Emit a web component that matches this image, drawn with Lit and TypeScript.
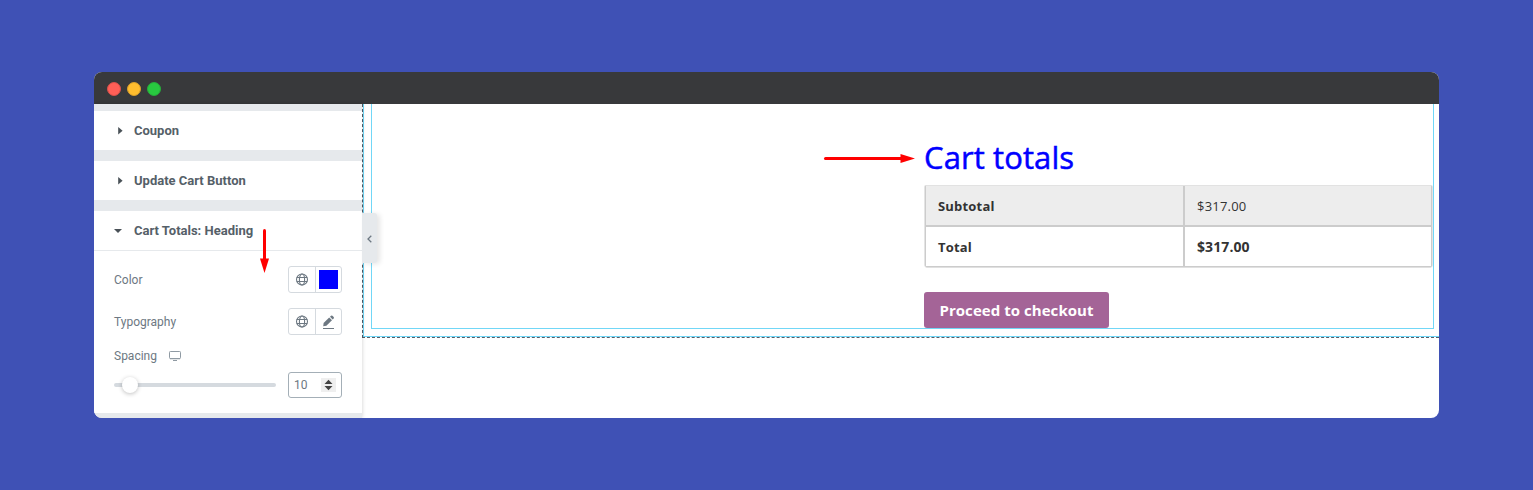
import { LitElement, html, svg, css } from 'lit';
import { customElement, property } from 'lit/decorators.js';

const globeIcon = svg`
  <svg width="14" height="14" viewBox="0 0 14 14" fill="none" stroke="#6d7882" stroke-width="1.1">
    <circle cx="7" cy="6.5" r="5.5" />
    <ellipse cx="7" cy="6.5" rx="2.6" ry="5.5" />
    <path d="M1.8 4.5h10.4M1.8 8.5h10.4" />
  </svg>
`;

const pencilIcon = svg`
  <svg width="14" height="14" viewBox="0 0 14 14" fill="#6d7882">
    <path d="M2.2 11.2l.4-3.2 5.6-5.6 2.8 2.8-5.6 5.6z" />
    <path d="M9 1.7l1-1q.7-.6 1.4 0l1.3 1.3q.6.7 0 1.4l-1 1z" />
    <path d="M2 13h11v1H2z" />
  </svg>
`;

@customElement('panel-section')
class PanelSection extends LitElement {
  @property() label = '';
  @property({ type: Boolean, reflect: true }) open = false;

  static styles = css`
    :host {
      display: block;
      background: #fff;
    }
    .head {
      display: flex;
      align-items: center;
      height: 39px;
      padding-left: 20px;
      font-size: 13px;
      font-weight: 700;
      color: #556068;
    }
    :host([open]) .head {
      border-bottom: 1px solid #e6e9ec;
    }
    .caret {
      width: 20px;
      height: 8px;
      flex: none;
    }
  `;

  render() {
    return html`
      <div class="head">
        <svg class="caret" viewBox="0 0 20 8" fill="#495157">
          ${this.open
            ? svg`<path d="M0 2h8l-4 4z" />`
            : svg`<path d="M4.2 0v7.4l4.4-3.7z" />`}
        </svg>
        <span>${this.label}</span>
      </div>
      <slot></slot>
    `;
  }
}

@customElement('cart-totals')
class CartTotals extends LitElement {
  static styles = css`
    :host {
      display: block;
      width: 509px;
      font-family: 'Open Sans', 'Noto Sans', sans-serif;
      color: #333;
    }
    .title {
      margin: 0;
      height: 49px;
      line-height: 42px;
      font-size: 31px;
      font-weight: 400;
      letter-spacing: 0.1px;
      color: #0000ff;
      -webkit-text-stroke: 0.5px #0000ff;
      white-space: nowrap;
    }
    .totals {
      display: grid;
      grid-template-columns: 257px 2px 246px;
      grid-template-rows: 39px 2px 39px;
      background: #ccc;
      border: 1px solid #ccc;
      border-top-color: #e2e2e2;
      border-radius: 2px;
      margin: 0 1px;
      box-shadow: -1px 0 #e4e4e4, 1px 0 #e4e4e4, 0 1px #e0e0e0;
    }
    .cell {
      display: flex;
      align-items: center;
      padding-left: 12px;
      background: #fff;
      font-size: 13px;
      letter-spacing: 0.2px;
    }
    .shade {
      background: #ededed;
    }
    .value {
      grid-column: 3;
    }
    .last {
      grid-row: 3;
    }
    .strong {
      font-weight: 700;
    }
    .amount {
      font-size: 14px;
      letter-spacing: 0.1px;
    }
    .checkout {
      display: flex;
      align-items: center;
      justify-content: center;
      width: 185px;
      height: 36px;
      margin-top: 25px;
      padding: 0;
      border: 0;
      border-radius: 3px;
      background: #a46497;
      color: #fff;
      font: 700 15px 'Open Sans', sans-serif;
      letter-spacing: 0.05px;
      white-space: nowrap;
    }
  `;

  render() {
    return html`
      <h2 class="title">Cart totals</h2>
      <div class="totals">
        <div class="cell shade strong">Subtotal</div>
        <div class="cell shade value">$317.00</div>
        <div class="cell strong last">Total</div>
        <div class="cell strong value last amount">$317.00</div>
      </div>
      <button class="checkout">Proceed to checkout</button>
    `;
  }
}

@customElement('app-root')
class AppRoot extends LitElement {
  static styles = css`
    :host {
      display: block;
      position: relative;
      box-sizing: border-box;
      height: 490px;
      padding: 72px 94px;
      background: #3f51b5;
      font-family: Roboto, sans-serif;
    }
    .window {
      display: flex;
      flex-direction: column;
      height: 346px;
      border-radius: 8px;
      overflow: hidden;
      background: #fff;
    }
    .titlebar {
      display: flex;
      align-items: center;
      gap: 6px;
      height: 32px;
      padding: 2px 0 0 13px;
      box-sizing: border-box;
      background: #38393b;
    }
    .dot {
      width: 14px;
      height: 14px;
      border-radius: 50%;
      border: 1px solid transparent;
      box-sizing: border-box;
    }
    .red {
      background: #ff5f57;
      border-color: #d8504b;
    }
    .yellow {
      background: #ffbd2e;
      border-color: #d9a02b;
    }
    .green {
      background: #28c940;
      border-color: #26ac3a;
    }
    .body {
      display: flex;
      flex: 1;
    }
    /* left settings panel */
    .panel {
      position: relative;
      z-index: 1;
      display: flex;
      flex-direction: column;
      gap: 11px;
      width: 268px;
      padding: 7px 0 5px;
      box-sizing: border-box;
      background: #e6e9ec;
      box-shadow: 0 0 4px rgba(0, 0, 0, 0.2);
    }
    .controls {
      height: 162px;
      padding: 15px 20px 0;
      box-sizing: border-box;
      font-size: 12px;
      color: #6d7882;
    }
    .row {
      display: flex;
      align-items: center;
      justify-content: space-between;
      height: 27px;
      margin-bottom: 15px;
    }
    .row + .row {
      margin-bottom: 14px;
    }
    .pair {
      display: flex;
      box-sizing: border-box;
      width: 54px;
      height: 27px;
      border: 1px solid #d5dadf;
      border-radius: 3px;
    }
    .half {
      display: flex;
      flex: 1;
      align-items: center;
      justify-content: center;
    }
    .half + .half {
      border-left: 1px solid #d5dadf;
    }
    .swatch {
      width: 19px;
      height: 19px;
      background: #0000ff;
    }
    .spacing {
      display: flex;
      align-items: center;
      gap: 12px;
      height: 14px;
      margin-bottom: 9px;
    }
    .slider-row {
      display: flex;
      align-items: center;
      justify-content: space-between;
    }
    .track {
      display: flex;
      align-items: center;
      width: 162px;
      height: 4px;
      padding-left: 8px;
      box-sizing: border-box;
      border-radius: 2px;
      background: #d5dadf;
    }
    .thumb {
      width: 16px;
      height: 16px;
      border-radius: 50%;
      background: #fff;
      box-shadow: 0 1px 4px rgba(0, 0, 0, 0.25);
    }
    .number {
      display: flex;
      align-items: center;
      justify-content: space-between;
      box-sizing: border-box;
      width: 54px;
      height: 26px;
      padding: 0 5px;
      border: 1px solid #a4afb7;
      border-radius: 3px;
      font-size: 12px;
    }
    .toggle {
      position: absolute;
      left: 268px;
      top: 109px;
      display: flex;
      align-items: center;
      justify-content: center;
      width: 15px;
      height: 50px;
      padding-top: 1px;
      box-sizing: border-box;
      border-radius: 0 3px 3px 0;
      background: #e6e9ec;
      box-shadow: 3px 1px 5px rgba(0, 0, 0, 0.1);
    }
    /* preview area with the section and column outlines */
    .section {
      flex: 1;
      height: 233px;
      border-left: 1px dashed #555d66;
      border-bottom: 1px dashed #555d66;
    }
    .outline {
      box-sizing: border-box;
      height: 233px;
      padding: 0 5px 7px 7px;
      border-left: 1px solid #71d7f7;
      border-bottom: 1px solid #71d7f7;
    }
    .column {
      display: flex;
      justify-content: flex-end;
      height: 224px;
      border: 1px solid #71d7f7;
      border-top: 0;
    }
    .cart {
      padding-top: 32px;
    }
    .arrow {
      position: absolute;
      z-index: 2;
    }
    .arrow-right {
      left: 823px;
      top: 153px;
    }
    .arrow-down {
      left: 259px;
      top: 229px;
    }
  `;

  render() {
    return html`
      <div class="window">
        <div class="titlebar">
          <span class="dot red"></span>
          <span class="dot yellow"></span>
          <span class="dot green"></span>
        </div>
        <div class="body">
          <div class="panel">
            <panel-section label="Coupon"></panel-section>
            <panel-section label="Update Cart Button"></panel-section>
            <panel-section label="Cart Totals: Heading" open>
              <div class="controls">
                <div class="row">
                  <span>Color</span>
                  <div class="pair">
                    <span class="half">${globeIcon}</span>
                    <span class="half"><span class="swatch"></span></span>
                  </div>
                </div>
                <div class="row">
                  <span>Typography</span>
                  <div class="pair">
                    <span class="half">${globeIcon}</span>
                    <span class="half">${pencilIcon}</span>
                  </div>
                </div>
                <div class="spacing">
                  <span>Spacing</span>
                  <svg width="12" height="10" viewBox="0 0 12 10">
                    <rect x="0.5" y="0.5" width="11" height="7" rx="0.8" fill="none" stroke="#8f9aa3" />
                    <path d="M1 7h10v1.2H1zM4 9h4v1H4z" fill="#8f9aa3" />
                  </svg>
                </div>
                <div class="slider-row">
                  <div class="track"><span class="thumb"></span></div>
                  <div class="number">
                    <span>10</span>
                    <svg width="15" height="14" viewBox="0 0 15 14">
                      <path d="M0 0h15v14H0z" fill="#efefef" />
                      <path d="M3.5 6h8L7.5 1.8zM3.5 8h8l-4 4.2z" fill="#444" />
                    </svg>
                  </div>
                </div>
              </div>
            </panel-section>
            <div class="toggle">
              <svg width="6" height="8" viewBox="0 0 6 8" fill="none" stroke="#6d7882" stroke-width="1.3">
                <path d="M4.3 0.8L1 4l3.3 3.2" />
              </svg>
            </div>
          </div>
          <div class="section">
            <div class="outline">
              <div class="column">
                <div class="cart"><cart-totals></cart-totals></div>
              </div>
            </div>
          </div>
        </div>
      </div>
      <svg class="arrow arrow-right" width="94" height="11" viewBox="0 0 94 11" fill="#f00">
        <rect x="1" y="4" width="80" height="3" rx="1.5" />
        <path d="M77.5 1L92 5.5 77.5 10z" />
      </svg>
      <svg class="arrow arrow-down" width="11" height="46" viewBox="0 0 11 46" fill="#f00">
        <rect x="4" y="0" width="3" height="34" rx="1.5" />
        <path d="M1 29.5h9L5.5 44z" />
      </svg>
    `;
  }
}
